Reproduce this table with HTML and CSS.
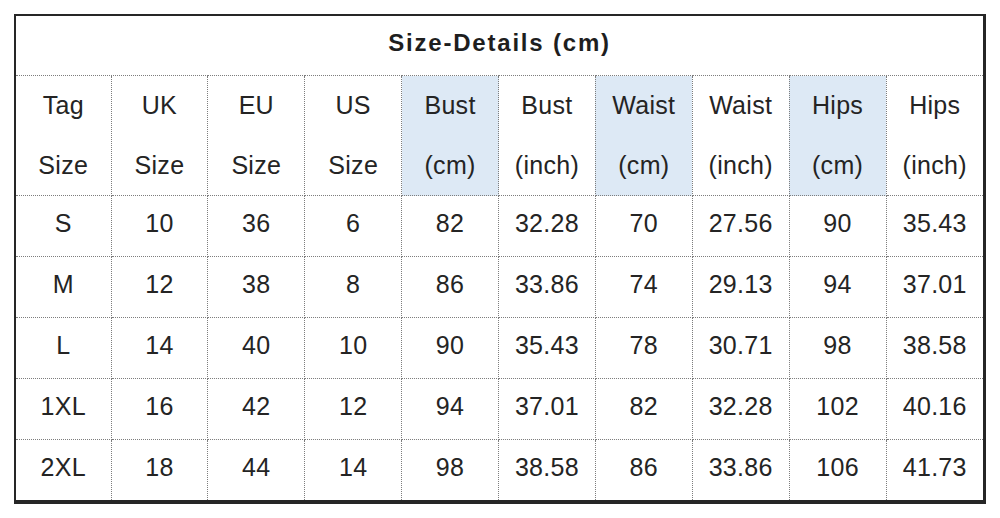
FILE: index.html
```html
<!DOCTYPE html>
<html>
<head>
<meta charset="utf-8">
<link rel="stylesheet" href="styles.css">
</head>
<body>
<div class="frame">
<table class="sizes">
<colgroup>
<col class="c1"><col><col><col><col><col><col><col><col><col>
</colgroup>
<tr class="title-row"><th colspan="10" class="title">Size-Details (cm)</th></tr>
<tr class="head-row">
<td>Tag<br>Size</td>
<td>UK<br>Size</td>
<td>EU<br>Size</td>
<td>US<br>Size</td>
<td class="hl">Bust<br>(cm)</td>
<td>Bust<br>(inch)</td>
<td class="hl">Waist<br>(cm)</td>
<td>Waist<br>(inch)</td>
<td class="hl">Hips<br>(cm)</td>
<td>Hips<br>(inch)</td>
</tr>
<tr class="data"><td>S</td><td>10</td><td>36</td><td>6</td><td>82</td><td>32.28</td><td>70</td><td>27.56</td><td>90</td><td>35.43</td></tr>
<tr class="data"><td>M</td><td>12</td><td>38</td><td>8</td><td>86</td><td>33.86</td><td>74</td><td>29.13</td><td>94</td><td>37.01</td></tr>
<tr class="data"><td>L</td><td>14</td><td>40</td><td>10</td><td>90</td><td>35.43</td><td>78</td><td>30.71</td><td>98</td><td>38.58</td></tr>
<tr class="data"><td>1XL</td><td>16</td><td>42</td><td>12</td><td>94</td><td>37.01</td><td>82</td><td>32.28</td><td>102</td><td>40.16</td></tr>
<tr class="data"><td>2XL</td><td>18</td><td>44</td><td>14</td><td>98</td><td>38.58</td><td>86</td><td>33.86</td><td>106</td><td>41.73</td></tr>
</table>
</div>
</body>
</html>
```
FILE: styles.css
```css
html, body {
  margin: 0;
  padding: 0;
  background: #ffffff;
}
body {
  padding: 14px 0 0 14px;
  font-family: "Liberation Sans", Arial, sans-serif;
  color: #242424;
}
.frame {
  width: 967px;
  border-style: solid;
  border-color: #262626;
  border-width: 2px 3px 4px 2px;
}
.sizes {
  width: 967px;
  border-collapse: collapse;
  table-layout: fixed;
}
.sizes col.c1 { width: 95px; }
.sizes td, .sizes th {
  border: 1px dotted #7d7d7d;
  text-align: center;
  vertical-align: middle;
  padding: 0;
  font-size: 25px;
  letter-spacing: 0.3px;
  font-weight: normal;
}
.sizes tr:first-child th { border-top: none; }
.sizes td:first-child, .sizes th:first-child { border-left: none; }
.sizes td:last-child, .sizes th:last-child { border-right: none; }
.sizes tr:last-child td { border-bottom: none; }
.sizes .title {
  height: 53px;
  padding: 0 0 6px 0;
  font-weight: bold;
  font-size: 24px;
  letter-spacing: 1.8px;
  color: #1e1e1e;
}
.head-row td {
  height: 119px;
  line-height: 59.5px;
}
.sizes .data td {
  height: 55px;
  padding-bottom: 5px;
  line-height: 25px;
}
.hl {
  background: #dde9f5;
}
```
